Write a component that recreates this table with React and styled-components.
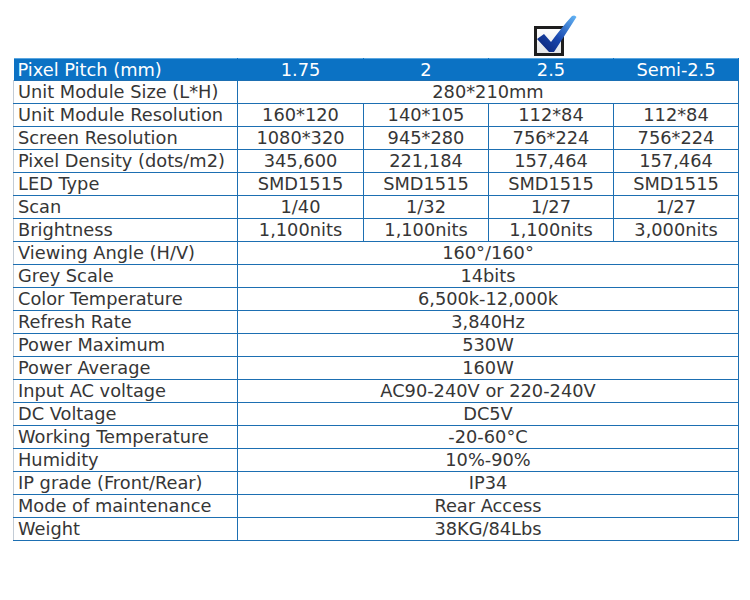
import React from 'react';
import styled, { createGlobalStyle } from 'styled-components';

const GlobalStyle = createGlobalStyle`
  html, body {
    margin: 0;
    padding: 0;
    background: #ffffff;
  }
  body {
    font-family: "DejaVu Sans", Verdana, sans-serif;
  }
`;

const Page = styled.div`
  width: 750px;
  height: 600px;
  padding-left: 13px;
  box-sizing: border-box;
`;

const SpecTable = styled.table`
  border-collapse: collapse;
  table-layout: fixed;
  width: 725px;
  font-size: 17.8px;
  color: #363636;
`;

const IconRow = styled.tr`
  height: 58px;
`;

const IconCell = styled.td`
  padding: 0;
  border: none;
  vertical-align: bottom;
`;

const CheckWrap = styled.div`
  display: flex;
  justify-content: center;
  padding-left: 10px;
  margin-bottom: 1px;
`;

const HeadRow = styled.tr`
  height: 22px;
  background: #0b72c4;
  color: #ffffff;
`;

const HeadCell = styled.th`
  font-weight: normal;
  padding: 0 4px;
  border-top: 1px solid #5aa6e0;
  border-right: 1px solid #0b72c4;
  text-align: ${p => (p.$label ? 'left' : 'center')};
  white-space: nowrap;
  line-height: 21px;
`;

const Row = styled.tr`
  height: 23px;
`;

const Label = styled.td`
  padding: 0 4px;
  border: 1px solid #1d6fb2;
  border-left: 1px solid #c3ccd6;
  white-space: nowrap;
  line-height: 21px;
`;

const Value = styled.td`
  padding: 0;
  border: 1px solid #1d6fb2;
  text-align: center;
  white-space: nowrap;
  line-height: 21px;
`;

const pitches = ['1.75', '2', '2.5', 'Semi-2.5'];

const specs = [
  ['Unit Module Size (L*H)', '280*210mm'],
  ['Unit Module Resolution', ['160*120', '140*105', '112*84', '112*84']],
  ['Screen Resolution', ['1080*320', '945*280', '756*224', '756*224']],
  ['Pixel Density (dots/m2)', ['345,600', '221,184', '157,464', '157,464']],
  ['LED Type', ['SMD1515', 'SMD1515', 'SMD1515', 'SMD1515']],
  ['Scan', ['1/40', '1/32', '1/27', '1/27']],
  ['Brightness', ['1,100nits', '1,100nits', '1,100nits', '3,000nits']],
  ['Viewing Angle (H/V)', '160°/160°'],
  ['Grey Scale', '14bits'],
  ['Color Temperature', '6,500k-12,000k'],
  ['Refresh Rate', '3,840Hz'],
  ['Power Maximum', '530W'],
  ['Power Average', '160W'],
  ['Input AC voltage', 'AC90-240V or 220-240V'],
  ['DC Voltage', 'DC5V'],
  ['Working Temperature', '-20-60°C'],
  ['Humidity', '10%-90%'],
  ['IP grade (Front/Rear)', 'IP34'],
  ['Mode of maintenance', 'Rear Access'],
  ['Weight', '38KG/84Lbs'],
];

function CheckIcon() {
  return (
    <svg width="44" height="42" viewBox="0 0 44 42">
      <defs>
        <linearGradient id="boxFill" x1="0" y1="0" x2="0" y2="1">
          <stop offset="0" stopColor="#ffffff" />
          <stop offset="1" stopColor="#e2e4e8" />
        </linearGradient>
        <linearGradient id="tick" x1="0" y1="1" x2="1" y2="0">
          <stop offset="0" stopColor="#0a1f6e" />
          <stop offset="0.45" stopColor="#1846ae" />
          <stop offset="1" stopColor="#66b8f7" />
        </linearGradient>
      </defs>
      <rect x="1.5" y="12.5" width="27" height="27" fill="url(#boxFill)" stroke="#1e1e1e" strokeWidth="3" />
      <path d="M3 24 L10 19 L17 27 Q28 12 38 1 Q41 -0.5 42.5 2 Q31 20 20 37 L15 37 Z" fill="url(#tick)" />
    </svg>
  );
}

export default function App() {
  return (
    <Page>
      <GlobalStyle />
      <SpecTable>
        <colgroup>
          <col style={{ width: 224 }} />
          <col style={{ width: 126 }} />
          <col style={{ width: 125 }} />
          <col style={{ width: 125 }} />
          <col style={{ width: 125 }} />
        </colgroup>
        <thead>
          <IconRow>
            <IconCell />
            <IconCell />
            <IconCell />
            <IconCell>
              <CheckWrap>
                <CheckIcon />
              </CheckWrap>
            </IconCell>
            <IconCell />
          </IconRow>
          <HeadRow>
            <HeadCell $label>Pixel Pitch (mm)</HeadCell>
            {pitches.map(p => (
              <HeadCell key={p}>{p}</HeadCell>
            ))}
          </HeadRow>
        </thead>
        <tbody>
          {specs.map(([label, value]) => (
            <Row key={label}>
              <Label>{label}</Label>
              {Array.isArray(value) ? (
                value.map((v, i) => <Value key={i}>{v}</Value>)
              ) : (
                <Value colSpan={4}>{value}</Value>
              )}
            </Row>
          ))}
        </tbody>
      </SpecTable>
    </Page>
  );
}
